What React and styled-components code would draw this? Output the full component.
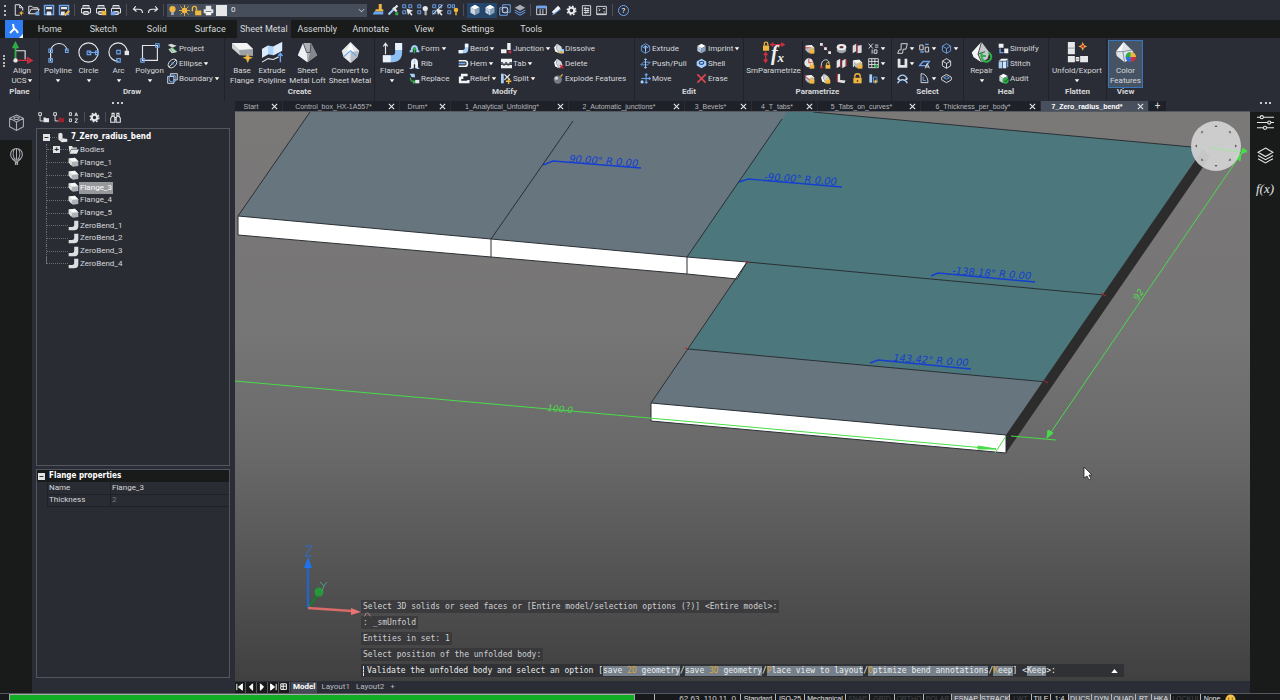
import React, { useState } from 'react'
import styled, { createGlobalStyle } from 'styled-components'

const W = '#e4e6e8'
const G = '#a9adb3'
const B = '#6aa5ee'
const L = '#a8d0fa'
const R = '#cf2f3c'
const N = '#2fae46'
const Y = '#efb73e'

const line = (d, stroke = W, width = 1.3) => (
  <path d={d} fill='none' stroke={stroke} strokeWidth={width} />
)
const shape = (d, fill = W) => <path d={d} fill={fill} />
const padlock = (
  <>
    {shape('M8 10h7v5.5H8z', Y)}
    {line('M9.5 10V8.5a2 2 0 0 1 4 0V10', Y)}
  </>
)
const cog = (
  <>
    <circle cx='8' cy='8' r='4' fill='none' stroke={W} strokeWidth='3' />
    <circle
      cx='8'
      cy='8'
      r='6.3'
      fill='none'
      stroke={W}
      strokeWidth='2'
      strokeDasharray='2.5 2.45'
    />
  </>
)
const printer = (
  <>
    {line('M4 6V2h8v4M2 6h12v6H2zM5 10h6v4H5z')}
    {line('M5 4h6', G)}
  </>
)
const cubeOutline = (color) =>
  line('M8 1l6 3.5v7L8 15l-6-3.5v-7zM2 4.5L8 8l6-3.5M8 8v7', color)
const solidCube = (
  <>
    {shape('M8 1l6 3.2L8 7.5 2 4.2z', '#fff')}
    {shape('M2 4.2l6 3.3V15l-6-3.3z', '#cfd6de')}
    {shape('M14 4.2L8 7.5V15l6-3.3z', '#8aa0b8')}
  </>
)
const gem = (
  <>
    {shape('M6 1l6 4 2 6-5 4-6-3-1-6z', '#d5dade')}
    {shape('M6 1l-1 7 4 7-6-3-1-6z', '#f7f9fb')}
    {line('M6 1l-1 7 4 7', '#6a7078', 0.8)}
  </>
)
const picker = (
  <>
    {line('M1 1h4v4H1zM9 1h4v4H9zM1 9h4v4H1z', B)}
    {shape('M6 6l9 3-4 1.5 3 3.5-1.5 1.5-3-3.5L8 15z')}
  </>
)
const bulb = (color) => (
  <>
    <circle cx='8' cy='6' r='4.5' fill={color} />
    {shape('M6 10h4v4.5H6z', G)}
  </>
)
const slab = (
  <>
    {shape('M2 4l9-1 4 4v6l-9 1-4-4z', '#b8bcc1')}
    {shape('M2 4l9-1 4 4-9 1z', '#f2f2f2')}
  </>
)
const bendPart = (
  <>
    {shape('M10 1h5v7c0 5-2 7-6 7H1v-5h6c2 0 3-1 3-3z', L)}
    {shape('M1 10h6v5H1zM10 1h5v5h-5z', '#f5f8fb')}
  </>
)
const grayBend = shape('M9 1h6v8c0 4-2 6-6 6H1v-5h5c2 0 3-1 3-3z', '#dcdedf')

const glyphs = {
  new: (
    <>
      {line('M3 1h6l4 4v4M3 1v14h6M9 1v4h4')}
      {shape('M11 9l1 2 3 1-3 1-1 3-1-3-2-1 2-1z', Y)}
    </>
  ),
  open: (
    <>
      {line('M1 13V3h4l2 2h6v2M1 13l3-6h11l-3 6z')}
      {shape('M10 10h5v5h-5z', B)}
    </>
  ),
  save: (
    <>
      {line('M2 2h12v12H2z', B, 2)}
      {shape('M4 4h8v3H4z')}
      {shape('M5 10h6v5H5z')}
    </>
  ),
  saveAs: (
    <>
      {line('M2 2h12v12H2z', B, 2)}
      {shape('M4 4h8v3H4z')}
      {shape('M4 10h5v5H4z')}
      {line('M9 15l6-6', Y, 2.5)}
    </>
  ),
  print: printer,
  preview: (
    <>
      {printer}
      {shape('M9 9h6v6H9z', Y)}
    </>
  ),
  publish: (
    <>
      {printer}
      {shape('M1 10h6v5H1z', B)}
    </>
  ),
  undo: line('M5 3L2 7l4 3M2 7h7c3 0 5 1 5 5', W, 1.6),
  redo: line('M11 3l3 4-4 3M14 7H7c-3 0-5 1-5 5', W, 1.6),
  plot: (
    <>
      {shape('M4 1h8v5H4zM1 6h14v6H1z')}
      {shape('M4 10h8v5H4z', '#f8f8f8')}
      {line('M4 9.5h8', '#464e5b', 1)}
    </>
  ),
  bulb: bulb(Y),
  grayBulb: (
    <>
      {line('M1 1h4v4H1zM1 9h4v4H1z', B)}
      <circle cx='11' cy='6' r='3.500' fill={W} />
      {shape('M10 9h3v6h-3z', G)}
    </>
  ),
  bulbs: (
    <>
      {line('M1 1h4v4H1zM1 9h4v4H1zM7 1h3v4H7z', B)}
      <circle cx='12' cy='8' r='3' fill={Y} />
      {shape('M11 11h2v4h-2z', Y)}
    </>
  ),
  sun: (
    <>
      <circle cx='8' cy='8' r='4' fill={Y} />
      {line('M8 0v16M0 8h16M2 2l12 12M14 2L2 14', Y, 1.2)}
    </>
  ),
  unlock: (
    <>
      {shape('M6 8h9v7H6z', Y)}
      {line('M2 9V5a3 3 0 0 1 6 0v3', Y, 2)}
    </>
  ),
  brush: (
    <>
      {shape('M9 0h4v7H9zM5 7h10v3H4z', Y)}
      {shape('M3 10h12v4H1z', B)}
    </>
  ),
  dropper: (
    <>
      {line('M2 14l7-7', L, 2.5)}
      {line('M8 5l5 5M10 6l4-4', W, 3)}
      {shape('M11 11h4v4h-4z', N)}
    </>
  ),
  pick: picker,
  unpick: (
    <>
      {picker}
      {line('M1 14L14 1', W)}
    </>
  ),
  cube: solidCube,
  hollow: (
    <>
      {line('M5 1h10v10H5zM1 5h10v10H1z', B)}
      <circle cx='8' cy='8' r='4' fill='none' stroke={W} />
    </>
  ),
  stack: (
    <>
      {shape('M8 1l7 4-7 4-7-4z', G)}
      {line('M1 8l7 4 7-4M1 11l7 4 7-4', B)}
    </>
  ),
  table: (
    <>
      {line('M1 2h14v12H1zM6 6v8M10 6v8')}
      {shape('M1 1h14v4H1z', B)}
    </>
  ),
  eraser: (
    <>
      {line('M3 12l9-9', '#f4f6f8', 5)}
      {line('M2 14L14 6', B, 1.5)}
    </>
  ),
  cog,
  checklist: line('M2 1h12v14H2zM4 5h8M4 8h8M4 11h8M6 3v4M10 6v4M7 9v4'),
  console: (
    <>
      {line('M1 2h14v12H1zM1 13h14')}
      {line('M4 5l2 2-2 2M10 5h3M11 10h2')}
    </>
  ),
  project: (
    <>
      {shape('M1 3l5-2 8 3-6 3zM2 9l6-2 7 6-8 2z', '#d7dbd8')}
      {line('M6 6l8 6M4 8l5 5', N)}
    </>
  ),
  ellipse: (
    <>
      <ellipse
        cx='8'
        cy='8'
        rx='7.5'
        ry='5'
        transform='rotate(-45 8 8)'
        fill='none'
        stroke={W}
        strokeWidth='1.3'
      />
      {line('M3 13L13 3', W)}
      {shape('M6.5 6.5h3v3h-3z', B)}
    </>
  ),
  boundary: (
    <>
      {line('M1 15V5h9v10zM5 5V1h10v9h-5', W)}
      <circle cx='8' cy='8' r='5' fill='none' stroke={B} strokeWidth='1.5' />
    </>
  ),
  form: (
    <>
      {line('M1 12h3c0-10 8-10 8 0h3', L, 3)}
      {line('M8 15V8M5.5 10L8 7l2.5 3', N, 2)}
    </>
  ),
  rib: (
    <>
      {shape('M3 15V6c0-7 10-7 10 0v9h-4V9H7v6z', '#f1f4f7')}
      {line('M1 15h4M11 15h4M8 2v6', L, 2)}
    </>
  ),
  replace: (
    <>
      {shape('M1 1h7l1 5H4z', L)}
      {line('M2 7c0 5 2 6 6 6M6 11l3 2-3 2', N, 2)}
      {shape('M9 10h6v5H9z')}
    </>
  ),
  bend: bendPart,
  hem: (
    <>
      {line('M1 4h9c5 0 5 8 0 8H1', '#f1f4f7', 2.5)}
      {line('M1 8h10', B, 2.5)}
    </>
  ),
  relief: line('M14 3H6v4H3v6h12v-3', '#f1f4f7', 3.5),
  junction: (
    <>
      {shape('M9 0h5v10H9zM0 9h8v6H0z', '#eef0f2')}
      {shape('M11 11h4v4h-4z', R)}
    </>
  ),
  tab: (
    <>
      {shape('M0 1h16v5h-4v2H9V6H6v2H3V6H0zM0 10h3v1h3v-1h3v1h3v-1h4v5H0z', '#eef0f2')}
      {line('M0 8.5h16', G, 0.8)}
    </>
  ),
  split: (
    <>
      {shape('M0 1h4v14H0z', L)}
      {line('M5 2l8 8M13 2L5 10', W, 1.8)}
      {line('M11 8v8M7 12h8', Y, 2)}
    </>
  ),
  dissolve: (
    <>
      {gem}
      {shape('M10 9h6v6h-6z', L)}
      {shape('M9 12h6v3H9z', Y)}
    </>
  ),
  gemLock: (
    <>
      {gem}
      {padlock}
    </>
  ),
  remove: (
    <>
      {gem}
      {line('M10 10l5 5M15 10l-5 5', R, 2)}
    </>
  ),
  bomb: (
    <>
      <circle cx='7' cy='9.5' r='6' fill='#777b80' />
      <circle cx='5' cy='7.5' r='2.4' fill='#d5d7d9' />
      {line('M11 5l3-3', Y, 1.8)}
    </>
  ),
  extrude: (
    <>
      {cubeOutline(B)}
      {line('M8 12V4M5.5 6.5L8 4l2.5 2.5', L)}
    </>
  ),
  pushPull: (
    <>
      {line('M1 10l4-4h10l-4 4z', B)}
      {line('M8 1v14M6 3l2-2 2 2M6 13l2 2 2-2', L)}
    </>
  ),
  move: (
    <>
      {line('M9 1v14M2 8h13M7 3l2-2 2 2M7 13l2 2 2-2M13 6l2 2-2 2', B, 1.6)}
      <circle cx='3' cy='13' r='2.3' fill={L} />
    </>
  ),
  imprint: (
    <>
      {solidCube}
      {line('M3 8l3 2v3', B)}
    </>
  ),
  shell: (
    <>
      {shape('M8 1l7 4v6l-7 4-7-4V5z', L)}
      <ellipse cx='8' cy='7' rx='4' ry='3' fill='#1b4f9c' />
      {shape('M6 6h4v2H6z')}
    </>
  ),
  erase: line('M2 2l12 12M14 2L2 14', '#e2474f', 2.2),
  slabLock: (
    <>
      {slab}
      {line('M1 7h9', R)}
      {padlock}
    </>
  ),
  bevelLock: (
    <>
      {slab}
      {line('M1 4l9 8', R)}
      {padlock}
    </>
  ),
  cornerLock: (
    <>
      {slab}
      {line('M2 13V4l9-1', '#fff')}
      {padlock}
    </>
  ),
  points: (
    <>
      {line('M2 2l11 11', R, 1.2)}
      {shape('M0 0h4v4H0zM6 6h4v4H6zM12 12h4v4h-4z')}
    </>
  ),
  ring: (
    <>
      <ellipse cx='8' cy='10' rx='7' ry='5' fill='#9fa3a8' />
      <ellipse cx='8' cy='6' rx='7' ry='4.5' fill='#ecedee' />
      <ellipse cx='8' cy='6' rx='3' ry='1.8' fill='#6b2f36' />
    </>
  ),
  plates: (
    <>
      {shape('M1 4l5-3v11l-5 3zM8 4l6-1v11l-6 1z', '#d9dbdd')}
      {line('M7 1v13', R)}
    </>
  ),
  x10: (
    <>
      {line('M1 1l6 7M7 1L1 8M10 3h5M10 6h5')}
      {line('M6 9.5v6M9 10h4v5H9z')}
    </>
  ),
  ballLock: (
    <>
      <circle cx='7' cy='7' r='6.5' fill='#e4e5e6' />
      {line('M7 1v6l6-1', R)}
      {padlock}
    </>
  ),
  arcLock: (
    <>
      {line('M2 14C0 0 14 0 13 8', W)}
      {shape('M0 12h4v3H0z', R)}
      {padlock}
    </>
  ),
  walls: (
    <>
      {shape('M1 4l5-3v11l-5 3zM9 4l5-3v11l-5 3z', '#e3e4e6')}
      {line('M7 2v12M15 2v10', R)}
    </>
  ),
  grid: (
    <>
      {line('M1 1h14v13H1zM1 5h14M1 9.500h14M5.500 1v13M10 1v13')}
      {line('M12 9v6M9 12h6', N, 2)}
    </>
  ),
  corner: (
    <>
      {shape('M2 2l4-1v9l8 1-2 4-10-2z', '#e3e4e6')}
      {line('M2 1v12', R)}
    </>
  ),
  lock: (
    <>
      {shape('M2 7h12v8H2z', Y)}
      {line('M4 7V5a4 4 0 0 1 8 0v2', Y, 2)}
      {shape('M7 10h2v3H7z', '#5f4517')}
    </>
  ),
  bars: (
    <>
      {shape('M2 2h4v12H2z', L)}
      {line('M8 6h5v8H8z', B)}
      {shape('M11 9l1 2 3 1-3 1-1 3-1-3-2-1 2-1z', Y)}
    </>
  ),
  profile: line('M6 1h9l-2 8H9l-1 6H1l2-5h3z', W),
  faces: (
    <>
      {line('M1 3h5v7H1zM9 6h5v7H9z', W)}
      {line('M2 13h5M9 2h5', B, 2)}
    </>
  ),
  wire: cubeOutline(B),
  channel: shape('M1 1h4v9h6V1h4v13H1z'),
  letterA: (
    <>
      {line('M1 11l5-6h9l-4 6z', B, 2)}
      {line('M9 15l3-7 3 7M10 13h4')}
    </>
  ),
  box: cubeOutline(W),
  arch: (
    <>
      {line('M1 9c3-8 11-8 14 0M1 15c3-7 11-7 14 0', L, 2)}
      {line('M1 9h3M12 9h3', W, 2)}
    </>
  ),
  quarter: (
    <>
      {line('M3 1v13h10C13 6 9 1 3 1z', W)}
      {line('M6 5v6h4', B)}
    </>
  ),
  tray: (
    <>
      {line('M8 2l7 4v4l-7 4-7-4V6z', W)}
      {line('M8 5l4 2-4 2-4-2z', B)}
    </>
  ),
  simplify: (
    <>
      {shape('M1 1h7v6H1zM9 8h6v7H9z', '#f1f3f5')}
      {line('M3 8v6h5', B, 2)}
    </>
  ),
  stitch: (
    <>
      {shape('M1 4l4-3h10l-3 3z', '#fff')}
      {shape('M1 5h5v10H1z', L)}
      {shape('M7 5h5v10H7z', '#d6e6f8')}
      {shape('M13 4l2-2v10l-2 2z', B)}
    </>
  ),
  audit: (
    <>
      {solidCube}
      <circle cx='11' cy='11' r='4.5' fill={N} />
      {line('M9 11l2 2 3-4', '#0c4a1b')}
    </>
  ),
  tree: (
    <>
      {line('M1 1h4v4H1zM3 5v8h5')}
      {shape('M8 8h3l1 1h4v6H8z')}
    </>
  ),
  treeRed: (
    <>
      {line('M1 1h4v4H1zM3 5v8h5')}
      {shape('M8 8h3l1 1h4v6H8z', '#9d222c')}
    </>
  ),
  sort: line('M2 1h3v4H2zM2 10h3v4H2zM10 6l2-5 2 5M10.500 4.500h3M10 10h4l-4 5h4'),
  binoculars: line('M3 2h3v4H3zM10 2h3v4h-3zM1 15V9l2-3h3l1 3v6zM15 15V9l-2-3h-3L9 9v6zM7 8h2v3H7z', W, 1.5),
  part: (
    <>
      {shape('M2 2l4-1 2 2v6l7 1v4l-8 1-5-4z', '#e4e5e6')}
      {line('M8 9l-3 3', G)}
    </>
  ),
  folder: shape('M1 3h5l1 2h6v2H5l-3 5zM5 8h11l-3 6H2z'),
  flange: (
    <>
      {shape('M1 2l9-1 5 5v7l-8 1-6-6z', '#aeb1b5')}
      {shape('M1 2l9-1 5 5-9 1z', '#f7f7f7')}
      {shape('M1 2l5 5-1 6-4-5z', '#dcdee0')}
    </>
  ),
  zeroBend: grayBend,
}

const bigGlyphs = {
  ucs: (
    <>
      {line('M4 21V5M4 10h11v10', W)}
      {line('M4 20V4M1.500 6L4 1l2.500 5z', N, 2)}
      {line('M5 21h17M18 18l5 3-5 3z', R, 1.6)}
      <circle cx='4' cy='21' r='2.5' fill={W} />
    </>
  ),
  polyline: (
    <>
      {line('M3 22V10C4 0 20-2 22 10', W)}
      {line('M1 8h4v4H1zM20 8h3v4h-3zM1 19h4v4H1z', B)}
    </>
  ),
  circle: (
    <>
      <circle cx='12' cy='12' r='11' fill='none' stroke={W} strokeWidth='1.3' />
      {line('M12 12h10', B)}
      {line('M10.500 10.500h4v4h-4zM20 10.500h3v4h-3z', B)}
    </>
  ),
  arc: (
    <>
      {line('M12 22A10.500 10.500 0 1 1 22 12', W)}
      {line('M10 9.500h4v4h-4zM10 19h4v4h-4z', B)}
      {shape('M19 10h5v5h-5z')}
    </>
  ),
  polygon: (
    <>
      {line('M4 4h17v17H4z', W)}
      {line('M2 19h4v4H2zM19 2h4v4h-4z', B)}
    </>
  ),
  baseFlange: (
    <>
      {shape('M0 1h17l7 7v8l-15-1-9-9z', '#9da1a6')}
      {shape('M0 1h17l7 7-16 1z', '#f3f3f3')}
      {shape('M0 1l8 8 1 6-9-8z', '#cdd0d3')}
      {shape('M18 13l1.500 3.500L24 18l-4 1.500L18 24l-2-4.500-4-1.500 4-1.500z', Y)}
    </>
  ),
  extrudePolyline: (
    <>
      {shape('M0 8l7-4 6 1 10-5v10l-10 5-6-1-7 4z', L)}
      {shape('M0 8l7-4v10l-7 4zM13 5l10-5v10l-10 5z', '#dcebfb')}
      {line('M0 23l7-4 6 1 6-3', W)}
      {line('M21 23V13M18.500 16l2.500-3 2.500 3', B, 1.6)}
    </>
  ),
  loft: (
    <>
      {shape('M7 1h9l7 14-11 8L1 15z', '#aeb3b8')}
      {shape('M7 1l4 11 1 11L1 15z', '#f0f1f2')}
      {shape('M16 1l-1 11-3 11 11-8z', '#83888e')}
      {line('M7 1l4 11h4l1-11', '#45484d', 1)}
    </>
  ),
  convert: (
    <>
      {shape('M12 0l10 10-2 7-8 7-8-7-2-7z', '#e6e9ec')}
      {shape('M12 12l9-2-1 7-8 7z', '#b9bec4')}
      {shape('M12 1l4 9-4 2-4-2z', '#fff')}
      {line('M4 17l8-7 8 7', B)}
    </>
  ),
  bigFlange: (
    <>
      {shape('M15 1h8v11c0 7-4 11-11 11H1v-8h10c3 0 4-1 4-4z', '#8dc0f4')}
      {shape('M1 15h9v8H1zM15 1h8v8h-8z', '#e9f1fa')}
      {line('M4 14V2M1.500 5L4 1.500 6.500 5', W)}
    </>
  ),
  repair: (
    <>
      {shape('M12 0l9 12-2 7-7 4-9-6-2-5z', '#c5c9cd')}
      {shape('M12 0L8 14l4 9-9-6-2-5z', '#f4f5f6')}
      {line('M12 0L8 14l4 9M8 14l8-3', '#33363b', 1)}
      {line('M13 14a5.500 5.500 0 1 0 7-2M12 11v5h5', N, 2.4)}
    </>
  ),
  unfold: (
    <>
      {shape('M1 0h8v14H1zM1 16h8v7H1zM10 17h4v5h-4zM15 16h9v7h-9z', '#e6e7e9')}
      {line('M1 7h8M10 19.500h4', G)}
      {shape('M18 0l1.500 3.500L23 5l-3.500 1.500L18 10l-1.500-3.500L13 5l3.500-1.500z', Y)}
      <circle cx='18' cy='5' r='1.6' fill={R} />
    </>
  ),
  colors: (
    <>
      {shape('M10 0l11 11-3 8-7 4-9-7-1-5z', '#dfe4e9')}
      {shape('M10 0L7 12 1 11z', '#fff')}
      {line('M1 11h8l2 12M9 11L20 9', '#7c8794', 1)}
      {shape('M18 17h-6a6 6 0 0 1 6-6z', N)}
      {shape('M18 17v-6a6 6 0 0 1 6 6z', Y)}
      {shape('M18 17h6a6 6 0 0 1-6 6z', R)}
      {shape('M18 17v6a6 6 0 0 1-6-6z', '#2d6fe0')}
    </>
  ),
}

const Icon = ({ name, size = 11 }) => (
  <Glyph viewBox='0 0 16 16' $size={size} aria-hidden='true'>
    {glyphs[name]}
  </Glyph>
)

const BigIcon = ({ name }) => (
  <Glyph viewBox='0 0 24 24' $size={21} aria-hidden='true'>
    {name === 'fx' ? (
      <>
        {shape('M0 4h7v6H0z', Y)}
        {line('M1.500 4V2a2 2 0 0 1 4 0v2', Y, 1.4)}
        {line('M10 3h13M12 1l-3 2 3 2M21 1l3 2-3 2M3 13v9M1 15l2-3 2 3M1 20l2 3 2-3', R, 1.6)}
        <FxText x='9' y='21'>
          f
          <tspan fontSize='15' dy='2'>
            x
          </tspan>
        </FxText>
      </>
    ) : (
      bigGlyphs[name]
    )}
  </Glyph>
)

const Caret = () => (
  <CaretSvg viewBox='0 0 8 5' aria-hidden='true'>
    <path d='M1 0h6L4 4z' fill='#fff' />
  </CaretSvg>
)

const fileTools = [
  ['new', 'open', 'save', 'saveAs'],
  ['print', 'preview', 'publish'],
  ['undo', 'redo'],
]
const layerTools = ['brush', 'dropper', 'pick', 'grayBulb', 'unpick', 'bulbs']
const viewTools = ['cube', 'imprint', 'hollow', 'stack']
const paletteTools = ['table', 'eraser', 'cog', 'checklist', 'console']
const menus = [
  'Home',
  'Sketch',
  'Solid',
  'Surface',
  'Sheet Metal',
  'Assembly',
  'Annotate',
  'View',
  'Settings',
  'Tools',
]

// big: [icon, lines, width, caret]; cols: [width, [icon, text, caret]]
const groups = [
  { title: 'Plane', width: 40, pad: 7, big: [['ucs', ['Align', 'UCS'], 30, 'inline']] },
  {
    title: 'Draw',
    width: 185,
    pad: 3,
    big: [
      ['polyline', ['Polyline'], 30, 'below'],
      ['circle', ['Circle'], 31, 'below'],
      ['arc', ['Arc'], 29, 'below'],
      ['polygon', ['Polygon'], 33, 'below'],
    ],
    cols: [[56, [['project', 'Project'], ['ellipse', 'Ellipse', true], ['boundary', 'Boundary', true]]]],
  },
  {
    title: 'Create',
    width: 150,
    pad: 2,
    big: [
      ['baseFlange', ['Base', 'Flange'], 30],
      ['extrudePolyline', ['Extrude', 'Polyline'], 30],
      ['loft', ['Sheet', 'Metal Loft'], 41],
      ['convert', ['Convert to', 'Sheet Metal'], 44],
    ],
  },
  {
    title: 'Modify',
    width: 260,
    pad: 1,
    big: [['bigFlange', ['Flange'], 32, 'below']],
    cols: [
      [49, [['form', 'Form', true], ['rib', 'Rib'], ['replace', 'Replace']]],
      [43, [['bend', 'Bend', true], ['hem', 'Hem', true], ['relief', 'Relief', true]]],
      [52, [['junction', 'Junction', true], ['tab', 'Tab', true], ['split', 'Split', true]]],
      [80, [['dissolve', 'Dissolve'], ['remove', 'Delete'], ['bomb', 'Explode Features']]],
    ],
  },
  {
    title: 'Edit',
    width: 109,
    pad: 4,
    cols: [
      [56, [['extrude', 'Extrude'], ['pushPull', 'Push/Pull'], ['move', 'Move']]],
      [46, [['imprint', 'Imprint', true], ['shell', 'Shell'], ['erase', 'Erase']]],
    ],
  },
  {
    title: 'Parametrize',
    width: 148,
    pad: 0,
    big: [['fx', ['SmParametrize'], 59]],
    divided: true,
    cols: [
      [16, [['slabLock'], ['ballLock'], ['bevelLock']]],
      [16, [['points'], ['arcLock'], ['gemLock']]],
      [16, [['ring'], ['walls'], ['corner']]],
      [16, [['plates'], ['cornerLock'], ['lock']]],
      [22, [['x10', '', true], ['grid', '', true], ['bars', '', true]]],
    ],
  },
  {
    title: 'Select',
    width: 72,
    pad: 4,
    cols: [
      [22, [['profile', '', true], ['channel', '', true], ['arch']]],
      [22, [['faces', '', true], ['letterA'], ['quarter', '', true]]],
      [22, [['wire', '', true], ['box'], ['tray']]],
    ],
  },
  {
    title: 'Heal',
    width: 85,
    pad: 2,
    big: [['repair', ['Repair'], 31, 'below']],
    cols: [[48, [['simplify', 'Simplify'], ['stitch', 'Stitch'], ['audit', 'Audit']]]],
  },
  { title: 'Flatten', width: 58, pad: 0, big: [['unfold', ['Unfold/Export'], 56, 'below']] },
  { title: 'View', width: 37, pad: 2, big: [['colors', ['Color', 'Features'], 33, '', true]] },
]

const documents = [
  ['Start', 48],
  ['Control_box_HX-1A557*', 117],
  ['Drum*', 51],
  ['1_Analytical_Unfolding*', 118],
  ['2_Automatic_junctions*', 116],
  ['3_Bevels*', 67],
  ['4_T_tabs*', 66],
  ['5_Tabs_on_curves*', 103],
  ['6_Thickness_per_body*', 120],
  ['7_Zero_radius_bend*', 108],
]

const features = [
  ['flange', 'Flange_1'],
  ['flange', 'Flange_2'],
  ['flange', 'Flange_3'],
  ['flange', 'Flange_4'],
  ['flange', 'Flange_5'],
  ['zeroBend', 'ZeroBend_1'],
  ['zeroBend', 'ZeroBend_2'],
  ['zeroBend', 'ZeroBend_3'],
  ['zeroBend', 'ZeroBend_4'],
]

const history = [
  'Select 3D solids or seed faces or [Entire model/selection options (?)] <Entire model>:',
  ': _smUnfold',
  'Entities in set: 1',
  'Select position of the unfolded body:',
]

const options = [
  ['save ', '2D', ' geometry'],
  ['save ', '3D', ' geometry'],
  ['', 'P', 'lace view to layout'],
  ['', 'O', 'ptimize bend annotations'],
  ['', 'K', 'eep'],
]

// label, width, state
const statusFields = [
  ['Standard', 35, 'on'],
  ['ISO-25', 29, 'on'],
  ['Mechanical', 41, 'on'],
  ['SNAP', 24, 'off'],
  ['GRID', 25, 'off'],
  ['ORTHO', 29, 'off'],
  ['POLAR', 28, 'off'],
  ['ESNAP', 29, 'active'],
  ['STRACK', 29, 'active'],
  ['LWT', 22, 'off'],
  ['TILE', 19, 'on'],
  ['1:4', 18, 'on'],
  ['DUCS', 23, 'active'],
  ['DYN', 20, 'active'],
  ['QUAD', 24, 'active'],
  ['RT', 16, 'active'],
  ['HKA', 19, 'active'],
  ['LOCKUI', 30, 'off'],
  ['None', 23, 'on'],
]

const QuickAccess = () => (
  <QuickBar>
    <Grip />
    {fileTools.map((set) => (
      <React.Fragment key={set[0]}>
        {set.map((name) => (
          <ToolButton key={name} aria-label={name}>
            <Icon name={name} size={12} />
          </ToolButton>
        ))}
        <Separator />
      </React.Fragment>
    ))}
    <LayerBox>
      <Icon name='bulb' size={11} />
      <Icon name='sun' size={11} />
      <Icon name='unlock' size={11} />
      <Icon name='plot' size={11} />
      <Swatch />
      <LayerSelect aria-label='Layer' defaultValue='0'>
        <option>0</option>
      </LayerSelect>
      <Chevron viewBox='0 0 8 5' aria-hidden='true'>
        {line('M1 1l3 3 3-3', W, 1)}
      </Chevron>
    </LayerBox>
    {layerTools.map((name) => (
      <ToolButton key={name} aria-label={name}>
        <Icon name={name} size={12} />
      </ToolButton>
    ))}
    <Separator />
    {viewTools.map((name, index) => (
      <ToolButton key={name} aria-label={name} $pressed={index < 2}>
        <Icon name={name} size={12} />
      </ToolButton>
    ))}
    <Separator />
    {paletteTools.map((name) => (
      <ToolButton key={name} aria-label={name}>
        <Icon name={name} />
      </ToolButton>
    ))}
    <Separator />
    <ToolButton aria-label='Help'>
      <HelpMark>?</HelpMark>
    </ToolButton>
  </QuickBar>
)

const RibbonGroup = ({ title, width, pad, big = [], cols = [], divided }) => (
  <Group $width={width}>
    <GroupBody $pad={pad}>
      {big.map(([icon, lines, w, caret, pressed]) => (
        <BigButton key={icon} $width={w} $pressed={pressed}>
          <BigIcon name={icon} />
          {lines.map((text, index) => (
            <BigText key={text}>
              {text}
              {caret === 'inline' && index === lines.length - 1 && <Caret />}
            </BigText>
          ))}
          {caret === 'below' && (
            <BigText>
              <Caret />
            </BigText>
          )}
        </BigButton>
      ))}
      {cols.map(([w, items], index) => (
        <SmallColumn key={index} $width={w} $divided={divided && index === 0}>
          {items.map(([icon, text, caret]) => (
            <SmallButton key={icon} aria-label={text || icon}>
              <Icon name={icon} />
              {text}
              {caret && <Caret />}
            </SmallButton>
          ))}
        </SmallColumn>
      ))}
    </GroupBody>
    <GroupTitle>{title}</GroupTitle>
  </Group>
)

const Explorer = () => {
  const [selected, setSelected] = useState('Flange_3')
  return (
    <SidePanel>
      <PanelTools>
        <ToolButton aria-label='Group'>
          <Icon name='tree' />
        </ToolButton>
        <ToolButton aria-label='Ungroup'>
          <Icon name='treeRed' />
        </ToolButton>
        <ToolButton aria-label='Sort'>
          <Icon name='sort' />
        </ToolButton>
        <Separator $narrow />
        <ToolButton aria-label='Options'>
          <Icon name='cog' />
        </ToolButton>
        <Separator $narrow />
        <ToolButton aria-label='Find'>
          <Icon name='binoculars' />
        </ToolButton>
      </PanelTools>
      <TreeBox>
        <Tree>
          <Root>
            <Expander aria-label='Collapse model'>−</Expander>
            <Dots $width={7} />
            <Icon name='part' />
            <NodeName $bold>7_Zero_radius_bend</NodeName>
          </Root>
          <Branch>
            <Dots $width={6} />
            <Expander aria-label='Expand bodies'>+</Expander>
            <Dots $width={8} />
            <Icon name='folder' />
            <NodeName>Bodies</NodeName>
          </Branch>
          {features.map(([icon, name], index) => (
            <Branch key={name} $last={index === features.length - 1}>
              <Dots $width={21} />
              <Icon name={icon} />
              <NodeName $selected={name === selected} onClick={() => setSelected(name)}>
                {name}
              </NodeName>
            </Branch>
          ))}
        </Tree>
      </TreeBox>
      <PropertyBox>
        <PropertyHead>
          <Expander aria-label='Collapse properties'>−</Expander>
          Flange properties
        </PropertyHead>
        <PropertyTable>
          <tbody>
            <tr>
              <th>Name</th>
              <td>Flange_3</td>
            </tr>
            <tr className='locked'>
              <th>Thickness</th>
              <td>2</td>
            </tr>
          </tbody>
        </PropertyTable>
      </PropertyBox>
    </SidePanel>
  )
}

const Scene = () => (
  <SceneSvg viewBox='235 112 1015 569' preserveAspectRatio='xMinYMin slice'>
    <g stroke='#2a3035' strokeWidth='1' strokeLinejoin='round'>
      <path d='M238 216L310 112H787L687 257z' fill='#67757f' stroke='none' />
      <path d='M787 112H813L1203 148L1047 382L688 349L747 262L687 257z' fill='#4c777c' stroke='none' />
      <path d='M688 349L1047 382L1006 435L651 403z' fill='#67757f' stroke='none' />
      <path d='M1006 435L1203 149L1210 157L1006 453z' fill='#2d2c2d' stroke='none' />
      <path d='M238 216L491 239L687 257L747 262L737 279L687 274L491 257L238 235z' fill='#fff' />
      <path d='M651 403L1006 435V453L651 421z' fill='#fff' />
      <path d='M491 257V239L573 121M687 274V257L782 119M813 112L1192 147M747 262L1104 295M688 349L1047 382M238 216L310 112' fill='none' />
      <path d='M747 262L651 403' fill='none' />
    </g>
    <g fill='none' stroke='#49dc49'>
      <path d='M235 381L996 449M1006 436L995 453M1011 436L1056 440M1047 438L1241 154M1213 148L1247 152' />
      <path d='M996 449l-18-3v3zM1047 438l1-8 5 3zM1241 154l-7 2 6 5zM1241 154l6-3-4-3z' fill='#49dc49' />
    </g>
    <g fill='none' stroke='#143fd0' strokeWidth='1.4'>
      <path d='M543 165L553 161L641 168M739 182L748 179L842 187M931 276L938 273L1035 282M870 363L878 360L971 369' />
    </g>
    <g fill='none' stroke='#b3262e'>
      <path d='M1101 293l5 3M1043 380l5 3M745 261l4 2M685 348l3 1' />
    </g>
    <Note transform='translate(569 162) rotate(4)'>90.00° R 0.00</Note>
    <Note transform='translate(764 180) rotate(4)'>-90.00° R 0.00</Note>
    <Note transform='translate(952 274) rotate(4)'>-138.18° R 0.00</Note>
    <Note transform='translate(893 361) rotate(4)'>143.42° R 0.00</Note>
    <Note $green transform='translate(547 411) rotate(5)'>100.0</Note>
    <Note $green transform='translate(1138 301) rotate(-56)'>92</Note>
    <circle cx='1216' cy='146' r='25' fill='#d4d4d4' fillOpacity='0.92' />
    <path d='M1210 148l30 4' stroke='#9fe59f' fill='none' />
    <g fill='#55585c'>
      {[0, 45, 90, 135, 180, 225, 270, 315].map((angle) => (
        <path key={angle} d='M1214.500 127l1.500-2 1.500 2z' transform={`rotate(${angle} 1216 146)`} />
      ))}
    </g>
    <g fill='none' strokeWidth='2.4'>
      <path d='M308 608L320 592' stroke='#1c7a2d' />
      <path d='M308 608V566' stroke='#2563c4' />
      <path d='M308 608L352 611' stroke='#d96a6a' />
    </g>
    <path d='M304 568L308 557L312 568z' fill='#1c74f0' />
    <path d='M351 608L361 612L351 615z' fill='#ea7474' />
    <circle cx='319' cy='592' r='4.5' fill='#26973a' />
    <g fill='none'>
      <path d='M305 546h7l-7 10h7' stroke='#2a6fc9' />
      <path d='M320 582l4 4 3-4M324 586l-2 5' stroke='#4f9c78' />
      <path d='M364 617l3-5 4 5' stroke='#b08b8b' />
    </g>
    <path d='M1084 467v11l3-2 2 4 2-1-2-4h3z' fill='#fff' stroke='#222' strokeWidth='0.8' />
  </SceneSvg>
)

const CommandLine = () => (
  <CommandArea>
    {history.map((text) => (
      <HistoryLine key={text}>{text}</HistoryLine>
    ))}
    <Prompt>
      <PromptGrip />
      <span>
        Validate the unfolded body and select an option [
        {options.map(([before, key, after], index) => (
          <React.Fragment key={before + key}>
            {index > 0 && '/'}
            <Option>
              {before}
              <b>{key}</b>
              {after}
            </Option>
          </React.Fragment>
        ))}
        ] &lt;<Option>Keep</Option>&gt;:
      </span>
      <ExpandButton aria-label='Show history'>
        <svg viewBox='0 0 8 5' width='7' height='4'>
          <path d='M0 5h8L4 0z' fill='#fff' />
        </svg>
      </ExpandButton>
    </Prompt>
  </CommandArea>
)

const arrows = {
  First: 'M1 1v8M8 1L3 5l5 4z',
  Previous: 'M7 1L3 5l4 4z',
  Next: 'M3 1l4 4-4 4z',
  Last: 'M9 1v8M2 1l5 4-5 4z',
  List: 'M1 1h7v7H1zM1 4h7M4 1v7',
}

const App = () => {
  const [menu, setMenu] = useState('Sheet Metal')
  const [doc, setDoc] = useState('7_Zero_radius_bend*')
  return (
    <>
      <GlobalStyle />
      <Shell>
        <QuickAccess />
        <MenuBar>
          <Logo aria-label='Application menu'>
            <svg viewBox='0 0 18 18' width='18' height='18'>
              {line('M8 4l1 5-4 4M9 9c2 0 3 2 4 4', '#fff', 2)}
              <path d='M18 14v4h-4z' fill='#fff' />
            </svg>
          </Logo>
          <MenuTabs>
            {menus.map((name) => (
              <MenuTab key={name} $active={name === menu} onClick={() => setMenu(name)}>
                {name}
              </MenuTab>
            ))}
          </MenuTabs>
        </MenuBar>
        <Ribbon>
          <RibbonGrip />
          {groups.map((group) => (
            <RibbonGroup key={group.title} {...group} />
          ))}
        </Ribbon>
        <DocumentRow>
          <PanelTop>
            <DotGrip />
          </PanelTop>
          <DocumentTabs>
            {documents.map(([name, width]) => (
              <DocumentTab key={name} $width={width} $active={name === doc}>
                <button onClick={() => setDoc(name)}>{name}</button>
                <button className='close' aria-label={`Close ${name}`}>
                  <svg viewBox='0 0 8 8' width='7' height='7'>
                    {line('M1 1l6 6M7 1L1 7', W, 1.3)}
                  </svg>
                </button>
              </DocumentTab>
            ))}
            <AddTab aria-label='New document'>+</AddTab>
          </DocumentTabs>
          <RailTop>
            <DotGrip />
          </RailTop>
        </DocumentRow>
        <Workspace>
          <Rail>
            <RailButton $active aria-label='Structure'>
              <svg viewBox='0 0 16 16' width='17' height='17'>
                {line('M8 1l6.500 3v8L8 15.500 1.500 12V4zM1.500 4L8 7.500 14.500 4M8 7.500v8', G, 1)}
                <ellipse cx='8' cy='4' rx='2.5' ry='1.2' fill='none' stroke={G} />
              </svg>
            </RailButton>
            <RailButton aria-label='Tips'>
              <svg viewBox='0 0 16 16' width='17' height='17'>
                <circle cx='8' cy='6' r='5.5' fill='none' stroke={G} />
                {line('M6 1c-2 4-1 8 1 10M10 1c2 4 1 8-1 10M4 10l3 3h2l3-3M8 1v10M7 14h2v2H7z', G, 1)}
              </svg>
            </RailButton>
          </Rail>
          <Explorer />
          <Drawing>
            <Viewport>
              <Scene />
              <CommandLine />
            </Viewport>
            <LayoutBar>
              {Object.entries(arrows).map(([name, d]) => (
                <ArrowButton key={name} aria-label={name}>
                  <svg viewBox='0 0 10 10' width='8' height='8'>
                    <path
                      d={d}
                      stroke='#fff'
                      strokeWidth='1.2'
                      fill={name === 'List' ? 'none' : '#fff'}
                    />
                  </svg>
                </ArrowButton>
              ))}
              <LayoutTab $active>Model</LayoutTab>
              <LayoutTab>Layout1</LayoutTab>
              <LayoutTab>Layout2</LayoutTab>
              <LayoutTab>+</LayoutTab>
            </LayoutBar>
          </Drawing>
          <Rail $right>
            <RailButton $right aria-label='Settings'>
              <svg viewBox='0 0 16 16' width='17' height='17'>
                {line('M0 3h3M6 3h10M0 8h10M13 8h3M0 13h6M9 13h7', W, 1)}
                <g fill='none' stroke={W}>
                  <circle cx='4.5' cy='3' r='1.500' />
                  <circle cx='11.5' cy='8' r='1.500' />
                  <circle cx='7.5' cy='13' r='1.500' />
                </g>
              </svg>
            </RailButton>
            <RailButton $right aria-label='Layers'>
              <svg viewBox='0 0 16 16' width='17' height='17'>
                {line('M8 1l7 4-7 4-7-4zM1 8l7 4 7-4M1 11l7 4 7-4', W, 1)}
              </svg>
            </RailButton>
            <RailButton $right aria-label='Parameters'>
              <Formula>f(x)</Formula>
            </RailButton>
          </Rail>
        </Workspace>
        <StatusBar>
          <Progress />
          <Coordinates>62.63, 110.11, 0</Coordinates>
          {statusFields.map(([label, width, state]) => (
            <StatusField key={label} $width={width} $state={state}>
              {label}
            </StatusField>
          ))}
          <Face viewBox='0 0 12 12' aria-hidden='true'>
            <circle cx='6' cy='6' r='5.500' fill='#f5c244' />
            <path d='M4 4v2M8 4v2' stroke='#6b4c10' fill='none' />
          </Face>
        </StatusBar>
      </Shell>
    </>
  )
}

const GlobalStyle = createGlobalStyle`
  * {
    box-sizing: border-box;
  }
  body {
    margin: 0;
    overflow: hidden;
    background: #191b1b;
    color: #d6d8da;
    font: 8px/10px Roboto, 'Noto Sans', sans-serif;
  }
  button {
    border: 0;
    padding: 0;
    background: none;
    color: inherit;
    font: inherit;
    white-space: nowrap;
  }
`
const Shell = styled.div`
  display: flex;
  flex-direction: column;
  height: 100vh;
`
const Glyph = styled.svg`
  flex: none;
  display: block;
  width: ${(p) => p.$size}px;
  height: ${(p) => p.$size}px;
  overflow: visible;
`
const FxText = styled.text`
  fill: #f0f0f0;
  font: italic 700 23px 'Liberation Serif', serif;
`
const CaretSvg = styled.svg`
  flex: none;
  width: 6px;
  height: 4px;
`
const QuickBar = styled.header`
  display: flex;
  align-items: center;
  flex: none;
  height: 20px;
  background: #2b2d36;
`
const Grip = styled.span`
  width: 2px;
  height: 11px;
  margin: 0 5px 0 4px;
  border-left: 2px dotted #b5b7bb;
`
const ToolButton = styled.button`
  display: flex;
  align-items: center;
  justify-content: center;
  flex: none;
  width: 15px;
  height: 15px;
  background: ${(p) => (p.$pressed ? '#24466b' : 'none')};
`
const Separator = styled.span`
  flex: none;
  width: 1px;
  height: 12px;
  margin: 0 ${(p) => (p.$narrow ? 2 : 3)}px 0 3px;
  background: #4b4e57;
`
const LayerBox = styled.div`
  display: flex;
  align-items: center;
  gap: 1px;
  width: 200px;
  height: 13px;
  margin-right: 3px;
  background: #464e5b;
`
const Swatch = styled.span`
  width: 11px;
  height: 11px;
  margin: 0 3px 0 1px;
  background: #e6e7e9;
`
const LayerSelect = styled.select`
  flex: 1;
  appearance: none;
  border: 0;
  padding: 0;
  background: none;
  color: #e6e7e9;
  font: 8px/12px Roboto, sans-serif;
`
const Chevron = styled.svg`
  width: 7px;
  height: 5px;
  margin-right: 2px;
`
const HelpMark = styled.span`
  width: 11px;
  height: 11px;
  border: 1px solid #6aa5ee;
  border-radius: 50%;
  line-height: 9px;
  text-align: center;
  color: #fff;
`
const MenuBar = styled.nav`
  display: flex;
  flex: none;
  height: 18px;
  padding-left: 5px;
  background: #191b1b;
`
const Logo = styled.button`
  width: 18px;
  height: 18px;
  background: #2f7df5;
`
const MenuTabs = styled.div`
  display: flex;
  width: 535px;
`
const MenuTab = styled.button`
  flex: 1;
  font-size: 9px;
  background: ${(p) => (p.$active ? '#2b2d36' : 'none')};
`
const Ribbon = styled.section`
  display: flex;
  flex: none;
  height: 63px;
  background: #2b2d36;
`
const RibbonGrip = styled.span`
  flex: none;
  width: 2px;
  height: 12px;
  margin: 17px -5px 0 3px;
  border-left: 2px dotted #b5b7bb;
`
const Group = styled.div`
  display: flex;
  flex-direction: column;
  flex: none;
  width: ${(p) => p.$width}px;
  border-right: 1px solid #202229;
  &:last-child {
    border: 0;
  }
`
const GroupBody = styled.div`
  display: flex;
  height: 49px;
  padding: 3px 0 0 ${(p) => p.$pad}px;
`
const GroupTitle = styled.div`
  text-align: center;
  font-weight: 700;
`
const BigButton = styled.button`
  display: flex;
  flex-direction: column;
  align-items: center;
  flex: none;
  width: ${(p) => p.$width}px;
  height: 46px;
  padding-top: 1px;
  background: ${(p) => (p.$pressed ? '#465365' : 'none')};
  outline: ${(p) => (p.$pressed ? '1px solid #3777b9' : 'none')};
  svg + span {
    margin-top: 3px;
  }
`
const BigText = styled.span`
  display: flex;
  align-items: center;
  height: 10px;
`
const SmallColumn = styled.div`
  display: flex;
  flex-direction: column;
  flex: none;
  width: ${(p) => p.$width}px;
  padding-left: 1px;
  box-shadow: ${(p) => (p.$divided ? '-1px 0 #1c1e24' : 'none')};
`
const SmallButton = styled.button`
  display: flex;
  align-items: center;
  gap: 1px;
  height: 15px;
`
const DocumentRow = styled.div`
  display: flex;
  flex: none;
  height: 11px;
  background: #2b2d36;
`
const PanelTop = styled.div`
  display: flex;
  justify-content: center;
  flex: none;
  width: 235px;
  padding-top: 1px;
`
const RailTop = styled(PanelTop)`
  width: 30px;
`
const DotGrip = styled.span`
  width: 11px;
  height: 2px;
  border-top: 2px dotted #c9cbce;
`
const DocumentTabs = styled.div`
  display: flex;
  flex: 1;
  min-width: 0;
  border-bottom: 1px solid #555a62;
`
const DocumentTab = styled.div`
  display: flex;
  flex: none;
  width: ${(p) => p.$width}px;
  border-right: 1px solid #2b2d36;
  background: ${(p) => (p.$active ? '#48505d' : '#1f2128')};
  color: ${(p) => (p.$active ? '#fff' : '#b4b6ba')};
  font: ${(p) => (p.$active ? 700 : 400)} 7px/9px 'Liberation Sans', sans-serif;
  button {
    flex: 1;
  }
  .close {
    flex: none;
    display: flex;
    align-items: center;
    justify-content: center;
    width: 15px;
  }
`
const AddTab = styled.button`
  width: 17px;
  background: #1f2128;
  font-size: 10px;
`
const Workspace = styled.main`
  display: flex;
  flex: 1;
  min-height: 0;
`
const Rail = styled.aside`
  flex: none;
  width: ${(p) => (p.$right ? 30 : 32)}px;
  background: #191b1b;
`
const RailButton = styled.button`
  display: flex;
  align-items: center;
  justify-content: center;
  width: 100%;
  height: ${(p) => (p.$right ? 33 : 28)}px;
  margin-bottom: ${(p) => (p.$active ? 2 : 0)}px;
  padding-bottom: ${(p) => (p.$active ? 8 : p.$right ? 12 : 0)}px;
  background: ${(p) => (p.$active ? '#2b2d36' : 'none')};
`
const Formula = styled.span`
  color: #e4e6e8;
  font: italic 13px/16px 'Liberation Serif', serif;
`
const SidePanel = styled.aside`
  display: flex;
  flex-direction: column;
  flex: none;
  width: 203px;
  padding: 0 5px 15px 4px;
  background: #2b2d36;
`
const PanelTools = styled.div`
  display: flex;
  align-items: flex-start;
  flex: none;
  height: 16px;
  ${ToolButton} {
    height: 10px;
  }
  ${Separator} {
    height: 10px;
  }
`
const PanelBox = styled.section`
  border: 1px solid #53565e;
  background: #2a2c34;
`
const TreeBox = styled(PanelBox)`
  flex: 337;
  min-height: 0;
  padding: 2px 6px;
`
const Tree = styled.ul`
  display: grid;
  grid-auto-rows: 1fr;
  height: 139px;
  margin: 0;
  padding: 0;
  list-style: none;
`
const Root = styled.li`
  display: flex;
  align-items: center;
`
const Branch = styled.li`
  display: flex;
  align-items: center;
  margin-left: 3px;
  border-left: 1px dotted #6a6d74;
  border-image: ${(p) =>
    p.$last ? 'linear-gradient(#6a6d74 50%, transparent 50%) 1' : 'none'};
`
const Dots = styled.span`
  width: ${(p) => p.$width}px;
  border-top: 1px dotted #6a6d74;
`
const Expander = styled.button`
  flex: none;
  width: 7px;
  height: 7px;
  background: #e2e3e5;
  color: #22242a;
  font: 700 8px/7px 'Liberation Sans', sans-serif;
  overflow: hidden;
`
const NodeName = styled.button`
  height: 12px;
  padding: 0 1px;
  background: ${(p) => (p.$selected ? '#96989c' : 'none')};
  color: ${(p) => (p.$selected || p.$bold ? '#fff' : '#d6d8da')};
  ${(p) => p.$bold && "font: 700 8px/10px 'DejaVu Sans Condensed', 'DejaVu Sans', sans-serif;"}
  ${Root} & {
    margin-left: 2px;
  }
  ${Root} svg,
  ${Branch} svg {
    margin-left: 1px;
  }
`
const PropertyBox = styled(PanelBox)`
  flex: 210;
  min-height: 0;
  margin-top: 3px;
`
const PropertyHead = styled.header`
  display: flex;
  align-items: center;
  gap: 4px;
  height: 12px;
  padding-left: 1px;
  background: #191b1b;
  color: #fff;
  font: 700 8px/10px 'DejaVu Sans Condensed', 'DejaVu Sans', sans-serif;
`
const PropertyTable = styled.table`
  width: calc(100% - 10px);
  margin-left: 10px;
  border-collapse: collapse;
  tr {
    height: 12px;
  }
  th,
  td {
    padding: 0 1px;
    border-bottom: 1px solid #1f2127;
    border-left: 1px solid #1f2127;
    font-weight: 400;
    text-align: left;
  }
  th {
    width: 63px;
  }
  .locked td {
    color: #777a80;
  }
`
const Drawing = styled.section`
  display: flex;
  flex-direction: column;
  flex: 1;
  min-width: 0;
`
const Viewport = styled.div`
  position: relative;
  flex: 1;
  min-height: 0;
  overflow: hidden;
  background: linear-gradient(#7b7878, #767575 40%, #696969 60%, #404040);
`
const SceneSvg = styled.svg`
  display: block;
  width: 100%;
  height: 100%;
`
const Note = styled.text`
  fill: ${(p) => (p.$green ? '#49dc49' : '#143fd0')};
  font: italic ${(p) => (p.$green ? 9 : 10)}px 'DejaVu Sans', sans-serif;
`
const CommandArea = styled.div`
  position: absolute;
  left: 126px;
  right: 126px;
  bottom: 4px;
  display: flex;
  flex-direction: column;
  align-items: flex-start;
  gap: 3px;
  color: #cfd1d3;
  font: 8px/13px 'DejaVu Sans Mono', monospace;
  white-space: nowrap;
`
const HistoryLine = styled.div`
  padding: 0 2px;
  background: rgba(48, 49, 52, 0.6);
`
const Prompt = styled.div`
  display: flex;
  align-items: center;
  align-self: stretch;
  height: 13px;
  padding-left: 2px;
  background: rgba(42, 44, 48, 0.75);
  color: #eceded;
`
const PromptGrip = styled.span`
  height: 10px;
  margin-right: 3px;
  border-left: 1px dashed #e4e6e8;
`
const Option = styled.button`
  background: #75808b;
  line-height: 10px;
  white-space: pre;
  b {
    color: #d9a63a;
    font-weight: 400;
  }
`
const ExpandButton = styled.button`
  display: flex;
  margin: 0 6px 0 auto;
`
const LayoutBar = styled.nav`
  display: flex;
  align-items: center;
  flex: none;
  height: 12px;
  background: #2b2d36;
`
const ArrowButton = styled.button`
  display: flex;
  align-items: center;
  justify-content: center;
  width: 11px;
  height: 11px;
  border-right: 1px solid #555860;
  background: #191b1b;
`
const LayoutTab = styled.button`
  height: 11px;
  padding: 0 2px;
  margin: 0 1px;
  background: ${(p) => (p.$active ? '#474a54' : 'none')};
  color: ${(p) => (p.$active ? '#fff' : '#b9bbbf')};
  font-weight: ${(p) => (p.$active ? 700 : 400)};
`
const StatusBar = styled.footer`
  display: flex;
  align-items: flex-start;
  flex: none;
  height: 7px;
  padding-left: 9px;
  border-top: 1px solid #55585d;
  background: #17191a;
  overflow: hidden;
  font: 8px/10px 'Liberation Sans', sans-serif;
  white-space: nowrap;
`
const Progress = styled.div`
  flex: none;
  width: 626px;
  height: 7px;
  border: 1px solid #a7aaa9;
  background: #10ad25;
`
const Coordinates = styled.span`
  flex: 1;
  margin-left: 19px;
  padding: 0 4px 0 0;
  border-left: 1px solid #b6b8ba;
  text-align: right;
`
const StatusField = styled.button`
  flex: none;
  width: ${(p) => p.$width}px;
  overflow: hidden;
  border-left: 1px solid #b6b8ba;
  background: ${(p) => (p.$state === 'active' ? '#4b4e54' : 'none')};
  color: ${(p) => (p.$state === 'off' ? '#45484c' : '#e4e6e8')};
  font-size: 7px;
`
const Face = styled.svg`
  flex: none;
  width: 11px;
  height: 11px;
  margin: 0 44px 0 2px;
`

export default App
